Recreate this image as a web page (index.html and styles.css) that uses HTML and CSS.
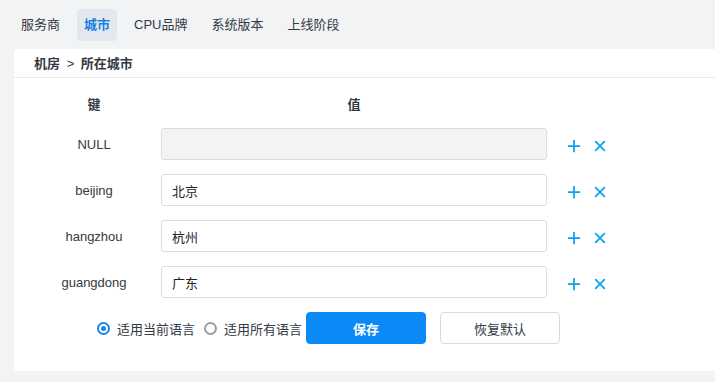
FILE: index.html
```html
<!DOCTYPE html>
<html lang="zh-CN">
<head>
  <meta charset="UTF-8" />
  <title>所在城市</title>
  <link rel="stylesheet" href="styles.css">
</head>
<body>

  <nav class="tabs">
    <span class="tab">服务商</span>
    <span class="tab active">城市</span>
    <span class="tab">CPU品牌</span>
    <span class="tab">系统版本</span>
    <span class="tab">上线阶段</span>
  </nav>

  <div class="card">
    <div class="card-header">机房 <span class="sep">&gt;</span> 所在城市</div>

    <div class="card-body">
      <div class="row head">
        <div class="key">键</div>
        <div class="val">值</div>
      </div>

      <div class="row">
        <div class="key">NULL</div>
        <input class="val input" type="text" disabled>
        <div class="ops">
          <svg viewBox="0 0 16 16"><path d="M8 1v14M1 8h14"/></svg>
          <svg viewBox="0 0 16 16"><path d="M2.5 2.5l11 11M13.5 2.5l-11 11"/></svg>
        </div>
      </div>

      <div class="row">
        <div class="key">beijing</div>
        <input class="val input" type="text" value="北京">
        <div class="ops">
          <svg viewBox="0 0 16 16"><path d="M8 1v14M1 8h14"/></svg>
          <svg viewBox="0 0 16 16"><path d="M2.5 2.5l11 11M13.5 2.5l-11 11"/></svg>
        </div>
      </div>

      <div class="row">
        <div class="key">hangzhou</div>
        <input class="val input" type="text" value="杭州">
        <div class="ops">
          <svg viewBox="0 0 16 16"><path d="M8 1v14M1 8h14"/></svg>
          <svg viewBox="0 0 16 16"><path d="M2.5 2.5l11 11M13.5 2.5l-11 11"/></svg>
        </div>
      </div>

      <div class="row">
        <div class="key">guangdong</div>
        <input class="val input" type="text" value="广东">
        <div class="ops">
          <svg viewBox="0 0 16 16"><path d="M8 1v14M1 8h14"/></svg>
          <svg viewBox="0 0 16 16"><path d="M2.5 2.5l11 11M13.5 2.5l-11 11"/></svg>
        </div>
      </div>

      <div class="actions">
        <label class="radio checked"><span class="dot"></span>适用当前语言</label>
        <label class="radio"><span class="dot"></span>适用所有语言</label>
        <button class="btn primary">保存</button>
        <button class="btn">恢复默认</button>
      </div>
    </div>
  </div>

</body>
</html>
```

FILE: styles.css
```css
* {
  box-sizing: border-box;
}

body {
  margin: 0;
  font-family: "Liberation Sans", "Noto Sans CJK SC", sans-serif;
  font-size: 13px;
  color: #333a44;
  background-color: #f2f3f5;
}

.tabs {
  display: flex;
  gap: 10px;
  padding: 9px 0 0 14px;
}

.tab {
  height: 32px;
  line-height: 32px;
  padding: 0 7px;
  border-radius: 4px;
}

.tab.active {
  background: #e4e8ee;
  color: #1a7fe3;
  font-weight: bold;
}

.card {
  margin: 8px 0 0 14px;
  background: #fff;
  border-radius: 4px 0 0 4px;
  height: 322px;
}

.card-header {
  height: 29px;
  line-height: 29px;
  padding-left: 20px;
  font-weight: bold;
  border-bottom: 1px solid #e8eaed;
}

.card-header .sep {
  margin: 0 3px;
  font-weight: normal;
}

.card-body {
  padding: 0 0 0 20px;
}

.row {
  display: flex;
  align-items: center;
  height: 32px;
  margin-bottom: 14px;
}

.row.head {
  height: 50px;
  margin-bottom: 0;
  font-weight: bold;
}

.key {
  width: 120px;
  text-align: center;
  margin-right: 7px;
}

.val {
  width: 386px;
  text-align: center;
}

.input {
  height: 32px;
  border: 1px solid #dadde2;
  border-radius: 3px;
  padding: 0 10px;
  font: inherit;
  color: #222;
  text-align: left;
  outline: none;
}

.input:disabled {
  background: #f3f3f3;
}

.ops {
  display: flex;
  gap: 12px;
  margin: 3px 0 0 20px;
}

.ops svg {
  width: 14px;
  height: 14px;
  fill: none;
  stroke: #0aa2ea;
  stroke-width: 2;
}

.actions {
  display: flex;
  align-items: center;
  padding-left: 63px;
}

.radio {
  display: flex;
  align-items: center;
  margin-right: 9px;
}

.radio:last-of-type {
  margin-right: 0;
}

.radio .dot {
  width: 13px;
  height: 13px;
  border: 2px solid #9a9ca3;
  border-radius: 50%;
  margin-right: 7px;
  position: relative;
}

.radio.checked .dot {
  border-color: #1a84ee;
}

.radio.checked .dot::after {
  content: "";
  position: absolute;
  top: 2px;
  left: 2px;
  width: 5px;
  height: 5px;
  border-radius: 50%;
  background: #1a84ee;
}

.btn {
  width: 120px;
  height: 32px;
  margin-left: 4px;
  margin-right: 10px;
  border: 1px solid #d8dbe0;
  border-radius: 4px;
  background: #fff;
  font: inherit;
  color: #333a44;
}

.btn.primary {
  background: #0a89f7;
  border-color: #0a89f7;
  color: #fff;
  font-weight: bold;
}
```
